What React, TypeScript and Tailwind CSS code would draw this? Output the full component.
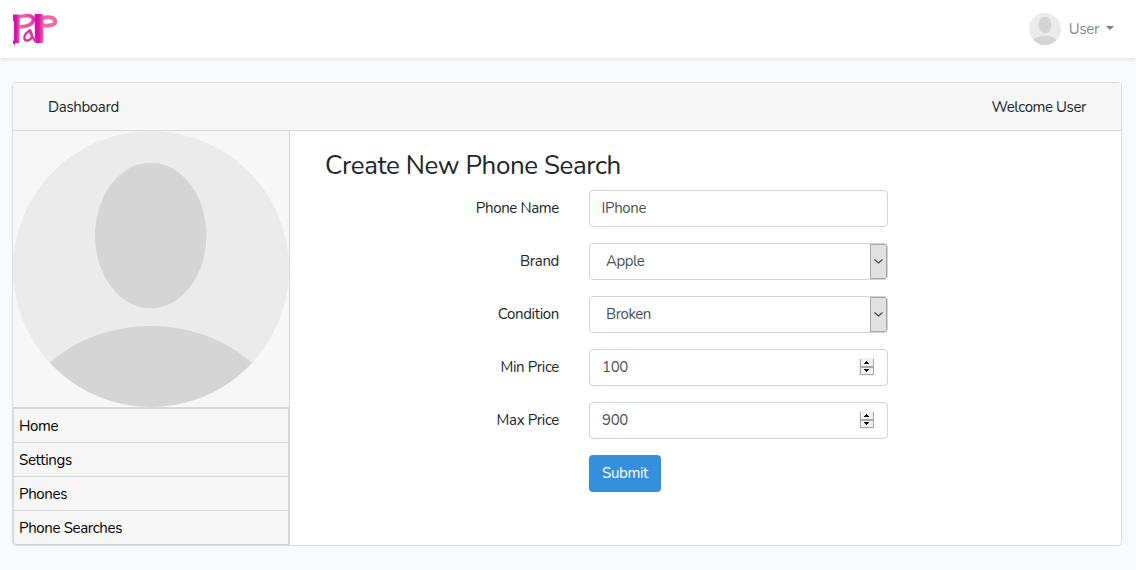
import type { ReactNode } from 'react';

function Avatar({ className, id }: { className: string; id: string }) {
  return (
    <svg className={className} viewBox="0 0 276 276" aria-hidden="true">
      <defs>
        <clipPath id={id}>
          <circle cx="138" cy="138" r="138" />
        </clipPath>
      </defs>
      <g clipPath={`url(#${id})`}>
        <rect width="276" height="276" fill="#ebebeb" />
        <ellipse cx="137.700" cy="104.5" rx="55.7" ry="72.7" fill="#d5d5d5" />
        <ellipse cx="137.700" cy="310" rx="138" ry="115" fill="#d5d5d5" />
      </g>
    </svg>
  );
}

function Logo() {
  return (
    <svg className="block h-8 w-[46px]" viewBox="0 0 46 32" fill="none" aria-hidden="true">
      <defs>
        <linearGradient id="stem" x1="0" y1="0" x2="1" y2="0">
          <stop offset="0.45" stopColor="#d412a8" />
          <stop offset="0.9" stopColor="#ee55b0" />
        </linearGradient>
        <linearGradient id="bowl" x1="8" y1="0" x2="24" y2="0" gradientUnits="userSpaceOnUse">
          <stop offset="0" stopColor="#f25fae" />
          <stop offset="0.6" stopColor="#ec4fb0" />
          <stop offset="1" stopColor="#d81fa6" />
        </linearGradient>
      </defs>
      <path d="M7 4C12 2.500 19 1.800 21 5C22.500 10 17 13.800 7.500 13.800" stroke="url(#bowl)" strokeWidth="3.400" />
      <path d="M1 1.500L8 1.500L7.500 30H3.500L3 32L1 30.500V28L2 27V8L1 8Z" fill="url(#stem)" />
      <path d="M29.500 5.500C36 3.500 43 4 43.300 8.500C43.300 12 37 13.300 30 12.300" stroke="#f06bac" strokeWidth="4" />
      <path d="M22.500 1H29.500L31.500 2V29.500L29 30H23.500L23 24Z" fill="url(#stem)" />
      <path d="M19.500 17.800C15.500 17.500 12.300 21.500 12.300 25C12.500 29 18 28 20 24C20.500 20.500 18.500 18.500 17 16.500L20.500 24L23.500 28.500" stroke="#e22cac" strokeWidth="2.400" />
    </svg>
  );
}

function Field({ label, children }: { label: string; children: ReactNode }) {
  return (
    <div className="flex h-[37px] items-center">
      <div className="mr-[30px] w-[269px] text-right">{label}</div>
      <div className="flex h-[37px] w-[299px] items-center justify-between overflow-hidden rounded border border-[#ced4da] bg-white text-[#495057]">
        {children}
      </div>
    </div>
  );
}

function SelectArrow() {
  return (
    <span className="flex h-[35px] w-[17px] items-center justify-center border border-[#a9a9a9] bg-[#e1e1e1]">
      <svg className="mr-px h-[7px] w-[11px]" viewBox="0 0 11 7" fill="none">
        <path d="M1.500 1.500L5.500 5L9.500 1.500" stroke="#444" strokeWidth="1.200" />
      </svg>
    </span>
  );
}

function Spinner() {
  return (
    <svg className="mr-3 mb-px h-[18px] w-4" viewBox="0 0 16 18" shapeRendering="crispEdges">
      <path d="M0 0H15V18H0Z" fill="#f0f0f0" />
      <path d="M1 1h1v7h12V1h1v8H1zM1 9h14v8H1zM2 10v6h12v-6z" fill="#a9a9a9" fillRule="evenodd" />
      <path d="M7 3h1v1h1v1h1v1H5V5h1V4h1zM5 11h5v1h-1v1H8v1H7v-1H6v-1H5z" fill="#000" />
    </svg>
  );
}

const menu = ['Home', 'Settings', 'Phones', 'Phone Searches'];

export default function App() {
  return (
    <div className="h-[570px] overflow-hidden bg-[#f8fafc] font-[Nunito,Lato,sans-serif] text-[15px] leading-[23px] tracking-[-0.34px] text-[#212529]">
      <nav className="flex h-[58px] items-center justify-between bg-white pr-[22px] pl-3 shadow-[0_2px_4px_rgba(0,0,0,0.07)]">
        <Logo />
        <div className="flex items-center text-black/50">
          <Avatar id="nav-avatar" className="mr-2 h-8 w-8" />
          <span className="pt-px">User</span>
          <span className="mb-0.5 ml-[7px] border-x-4 border-t-4 border-x-transparent border-t-black/50" />
        </div>
      </nav>

      <main className="mx-3 mt-6 mr-[14px] flex h-[464px] flex-col overflow-hidden rounded border border-[#dcddde] bg-white">
        <header className="flex h-12 shrink-0 items-center justify-between border-b border-[#d8d8d8] bg-[#f7f7f7] px-[35px] pt-px">
          <span>Dashboard</span>
          <span className="tracking-[-0.4px]">Welcome User</span>
        </header>
        <div className="flex grow">
          <aside className="w-[277px] border-r border-[#d8d8d8] bg-[#f7f7f7]">
            <Avatar id="profile-avatar" className="block h-[276px] w-[276px]" />
            <ul className="border border-b-0 border-[#d8d8d8] text-black">
              {menu.map((label) => (
                <li key={label} className="h-[34px] border-t border-[#d8d8d8] pt-1.5 pl-[5px] last:h-[35px] last:rounded-bl-[3px] last:border-b last:border-b-[#d0d0d0]">
                  {label}
                </li>
              ))}
            </ul>
          </aside>
          <section className="grow pt-[19px] pl-[35px]">
            <h1 className="h-10 text-[25.92px] leading-[31px] tracking-[-0.38px]">Create New Phone Search</h1>
            <form className="-ml-[35px] flex flex-col gap-4">
              <Field label="Phone Name">
                <span className="pb-px pl-[11.5px]">IPhone</span>
              </Field>
              <Field label="Brand">
                <span className="pl-4 tracking-[-0.5px]">Apple</span>
                <SelectArrow />
              </Field>
              <Field label="Condition">
                <span className="pl-4 tracking-[-0.45px]">Broken</span>
                <SelectArrow />
              </Field>
              <Field label="Min Price">
                <span className="pl-3">100</span>
                <Spinner />
              </Field>
              <Field label="Max Price">
                <span className="pl-3">900</span>
                <Spinner />
              </Field>
              <button type="button" className="ml-[299px] h-[37px] w-[72px] rounded bg-[#3490dc] text-white">
                Submit
              </button>
            </form>
          </section>
        </div>
      </main>
    </div>
  );
}
